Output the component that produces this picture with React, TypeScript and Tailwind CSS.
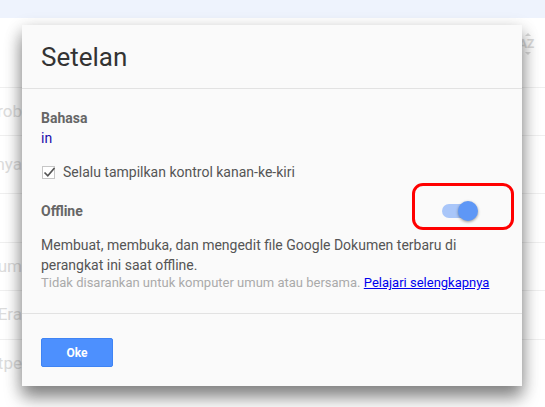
const rows = [
	{ h: 'h-[48px]', text: 'Wardrob' },
	{ h: 'h-[58px]', text: 'Salinannya' },
	{ h: 'h-[49px]', text: '' },
	{ h: 'h-[48px]', text: 'Dokum' },
	{ h: 'h-[49px]', text: 'Era' },
	{ h: 'h-[49px]', text: 'Hotpe' },
];

function SortIcon() {
	return (
		<svg width="18" height="22" viewBox="0 0 18 22" className="text-[#dadada]">
			<path d="M9 0 L12 3 H6 Z" fill="currentColor" />
			<path d="M9 22 L12 19 H6 Z" fill="currentColor" />
			<text x="0" y="15" fontSize="12" fontWeight="bold" fill="currentColor" fontFamily="Roboto, sans-serif">
				AZ
			</text>
		</svg>
	);
}

function Backdrop() {
	return (
		<div className="w-[545px] h-[407px] bg-white overflow-hidden">
			<div className="h-[18px] bg-[#eef3fd]" />
			<div className="h-[69px] flex justify-end items-start pt-[15px] pr-[8px]">
				<SortIcon />
			</div>
			{rows.map((row, i) => (
				<div key={i} className={`${row.h} border-t border-[#efefef] flex items-center`}>
					<div className="w-[22px] overflow-hidden flex justify-end">
						<span className="shrink-0 whitespace-nowrap text-[17px] text-[#dcdcdc]">{row.text}</span>
					</div>
				</div>
			))}
		</div>
	);
}

export default function App() {
	return (
		<div
			className="relative w-[545px] h-[407px] overflow-hidden"
			style={{ fontFamily: 'Roboto, "Liberation Sans", Arial, sans-serif' }}
		>
			<Backdrop />

			<div className="absolute left-[22px] top-[25px] w-[500px] bg-[#fafafa] shadow-[0_4px_16px_rgba(0,0,0,0.2),0_12px_16px_rgba(0,0,0,0.4)]">
				<div className="h-[64px] px-[19px] flex items-center border-b border-[#e2e2e2]">
					<h1 className="text-[26px] text-[#333] leading-none">Setelan</h1>
				</div>

				<div className="px-[19px] pt-[19px] pb-[22px] text-[14px] leading-5">
					<div className="font-bold text-[#666]">Bahasa</div>
					<div className="text-[#1a0dab]">in</div>

					<label className="mt-[14px] flex items-center gap-[8px] text-[#555]">
						<span className="relative w-[13px] h-[13px] ml-[1px] border border-[#c6c6c6] bg-white">
							<svg width="15" height="15" viewBox="0 0 15 15" className="absolute -left-[1px] -top-[3px]">
								<path d="M2.5 8.5 L5.8 11.8 L12.5 4" fill="none" stroke="#555" strokeWidth="1.7" />
							</svg>
						</span>
						Selalu tampilkan kontrol kanan-ke-kiri
					</label>

					<div className="relative mt-[19px] flex items-center justify-between">
						<span className="font-bold text-[#666]">Offline</span>
						<div className="mr-[25px] relative w-[36px] h-[20px] flex items-center">
							<div className="w-[34px] h-[14px] rounded-full bg-[#a9c6f9]" />
							<div className="absolute right-0 top-0 w-[20px] h-[20px] rounded-full bg-[#5e97f6] shadow-[0_1px_3px_rgba(0,0,0,0.4)]" />
						</div>
						<div className="absolute left-[371px] -top-[18px] w-[102px] h-[47px] border-[3px] border-[#ff0000] rounded-[11px]" />
					</div>

					<p className="mt-[14px] text-[#555]">
						Membuat, membuka, dan mengedit file Google Dokumen terbaru di perangkat ini saat offline.
					</p>
					<p className="text-[13px] leading-4 text-[#aaa]">
						Tidak disarankan untuk komputer umum atau bersama.{' '}
						<a href="#" className="text-[#0000ee] underline">
							Pelajari selengkapnya
						</a>
					</p>
				</div>

				<div className="border-t border-[#e2e2e2] px-[19px] pt-[24px] pb-[19px]">
					<button className="w-[72px] h-[29px] rounded-[2px] bg-[#4d90fe] border border-[#3f84f4] text-white text-[12px] font-bold">
						Oke
					</button>
				</div>
			</div>
		</div>
	);
}
